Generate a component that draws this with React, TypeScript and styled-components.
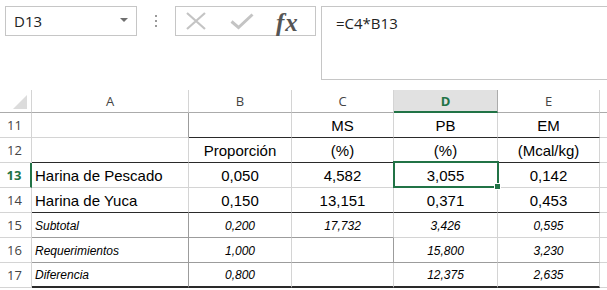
import React from "react";
import styled, { createGlobalStyle } from "styled-components";

const GlobalStyle = createGlobalStyle`
  html, body { margin: 0; padding: 0; background: #ffffff; }
  body { font-family: "Liberation Sans", Arial, sans-serif; overflow: hidden; }
`;

const GREEN = "#217346";
const GRID = "#d4d4d4";
const MID = "#9c9c9c";
const DARK = "#2a2a2a";

type Line = "grid" | "mid" | "dark" | "thick" | "none";

const lineCss = (l: Line) => {
  switch (l) {
    case "grid":
      return `1px solid ${GRID}`;
    case "mid":
      return `1px solid ${MID}`;
    case "dark":
      return `1px solid ${DARK}`;
    case "thick":
      return `2px solid ${DARK}`;
    default:
      return "none";
  }
};

const Page = styled.div`
  width: 607px;
  height: 290px;
  overflow: hidden;
  background: #fff;
`;

const TopBar = styled.div`
  display: flex;
  align-items: flex-start;
  padding: 6px 0 0 5px;
  height: 84px;
  box-sizing: border-box;
`;

const NameBox = styled.div`
  box-sizing: border-box;
  width: 132px;
  height: 30px;
  border: 1px solid #c6c6c6;
  display: flex;
  align-items: center;
  justify-content: space-between;
  padding: 0 8px 0 8px;
  font-family: "Open Sans", sans-serif;
  font-size: 15px;
  color: #222;
`;

const Caret = styled.span`
  width: 0;
  height: 0;
  border-left: 4px solid transparent;
  border-right: 4px solid transparent;
  border-top: 4px solid #6f6f6f;
  margin-top: -2px;
`;

const Dots = styled.div`
  width: 38px;
  height: 30px;
  display: flex;
  flex-direction: column;
  align-items: center;
  justify-content: center;
  gap: 3px;
`;

const Dot = styled.span`
  width: 2px;
  height: 2px;
  background: #9a9a9a;
`;

const FxBox = styled.div`
  box-sizing: border-box;
  width: 141px;
  height: 30px;
  border: 1px solid #c6c6c6;
  display: flex;
  align-items: center;
  padding: 0 0 0 9px;
  gap: 23px;
`;

const FxText = styled.span`
  font-family: "Liberation Serif", "DejaVu Serif", serif;
  font-style: italic;
  font-weight: bold;
  font-size: 25px;
  color: #555;
  margin-left: -1px;
  letter-spacing: 1px;
  line-height: 1;
  margin-top: 2px;
`;

const FormulaBar = styled.div`
  box-sizing: border-box;
  flex: 1;
  margin-left: 5px;
  height: 74px;
  border: 1px solid #c6c6c6;
  border-right: none;
  padding: 6px 0 0 14px;
  font-family: "Open Sans", sans-serif;
  font-size: 15px;
  color: #222;
`;

const Sheet = styled.div`
  margin-top: 6px;
  display: grid;
  grid-template-columns: 32px 157px 103px 102px 104px 102px 1fr;
  grid-auto-rows: 25px;
  grid-template-rows: 23px;
`;

const Corner = styled.div`
  box-sizing: border-box;
  border-right: 1px solid ${GRID};
  border-bottom: 1px solid #ababab;
  display: flex;
  align-items: flex-end;
  justify-content: flex-end;
  padding: 0 4px 3px 0;
`;

const Triangle = styled.span`
  width: 0;
  height: 0;
  border-left: 14px solid transparent;
  border-bottom: 14px solid #dcdcdc;
`;

const ColHead = styled.div<{ $sel?: boolean; $last?: boolean }>`
  box-sizing: border-box;
  display: flex;
  align-items: center;
  justify-content: center;
  font-family: "Open Sans", sans-serif;
  font-size: 13px;
  color: ${(p) => (p.$sel ? GREEN : "#444")};
  font-weight: ${(p) => (p.$sel ? 700 : 400)};
  background: ${(p) => (p.$sel ? "#e1e1e1" : "#fff")};
  border-right: ${(p) => (p.$last ? "none" : `1px solid ${p.$sel ? "#ababab" : GRID}`)};
  border-bottom: ${(p) => (p.$sel ? `2px solid ${GREEN}` : "1px solid #ababab")};
  padding-top: ${(p) => (p.$sel ? "1px" : "0")};
`;

const RowHead = styled.div<{ $sel?: boolean }>`
  box-sizing: border-box;
  display: flex;
  align-items: center;
  justify-content: center;
  font-family: "Open Sans", sans-serif;
  font-size: 13px;
  color: ${(p) => (p.$sel ? GREEN : "#444")};
  font-weight: ${(p) => (p.$sel ? 700 : 400)};
  border-right: ${(p) => (p.$sel ? `2px solid ${GREEN}` : `1px solid ${GRID}`)};
  border-bottom: 1px solid ${GRID};
  padding-right: 2px;
`;

const Cell = styled.div<{
  $align: "left" | "center";
  $italic?: boolean;
  $bottom: Line;
  $right: Line;
}>`
  box-sizing: border-box;
  position: relative;
  display: flex;
  align-items: center;
  justify-content: ${(p) => (p.$align === "left" ? "flex-start" : "center")};
  padding: ${(p) => (p.$align === "left" ? "1px 0 0 3px" : "1px 0 0 0")};
  font-family: "Liberation Sans", Arial, sans-serif;
  font-size: ${(p) => (p.$italic ? "12px" : "15px")};
  font-style: ${(p) => (p.$italic ? "italic" : "normal")};
  color: #000;
  white-space: nowrap;
  border-bottom: ${(p) => lineCss(p.$bottom)};
  border-right: ${(p) => lineCss(p.$right)};
`;

const Selection = styled.div`
  position: absolute;
  top: -2px;
  left: -1px;
  width: 106px;
  height: 27px;
  box-sizing: border-box;
  border: 2px solid ${GREEN};
  z-index: 2;
  pointer-events: none;
`;

const Handle = styled.div`
  position: absolute;
  right: -4px;
  bottom: -4px;
  width: 5px;
  height: 5px;
  background: ${GREEN};
  border: 1px solid #fff;
`;

type CellDef = { t: string; b: Line; r?: Line; sel?: boolean };
type RowDef = { n: number; italic?: boolean; cells: CellDef[]; f: Line };

const rows: RowDef[] = [
  {
    n: 11,
    f: "grid",
    cells: [
      { t: "", b: "grid", r: "mid" },
      { t: "", b: "dark" },
      { t: "MS", b: "dark" },
      { t: "PB", b: "dark" },
      { t: "EM", b: "dark" },
    ],
  },
  {
    n: 12,
    f: "grid",
    cells: [
      { t: "", b: "dark" },
      { t: "Proporción", b: "dark" },
      { t: "(%)", b: "dark" },
      { t: "(%)", b: "dark" },
      { t: "(Mcal/kg)", b: "dark" },
    ],
  },
  {
    n: 13,
    f: "grid",
    cells: [
      { t: "Harina de Pescado", b: "grid" },
      { t: "0,050", b: "grid" },
      { t: "4,582", b: "grid" },
      { t: "3,055", b: "grid", sel: true },
      { t: "0,142", b: "grid" },
    ],
  },
  {
    n: 14,
    f: "grid",
    cells: [
      { t: "Harina de Yuca", b: "dark" },
      { t: "0,150", b: "dark" },
      { t: "13,151", b: "dark" },
      { t: "0,371", b: "dark" },
      { t: "0,453", b: "dark" },
    ],
  },
  {
    n: 15,
    italic: true,
    f: "grid",
    cells: [
      { t: "Subtotal", b: "mid", r: "mid" },
      { t: "0,200", b: "mid" },
      { t: "17,732", b: "mid" },
      { t: "3,426", b: "grid" },
      { t: "0,595", b: "grid" },
    ],
  },
  {
    n: 16,
    italic: true,
    f: "grid",
    cells: [
      { t: "Requerimientos", b: "mid", r: "mid" },
      { t: "1,000", b: "mid" },
      { t: "", b: "mid", r: "mid" },
      { t: "15,800", b: "mid" },
      { t: "3,230", b: "mid" },
    ],
  },
  {
    n: 17,
    italic: true,
    f: "grid",
    cells: [
      { t: "Diferencia", b: "thick", r: "mid" },
      { t: "0,800", b: "thick" },
      { t: "", b: "thick" },
      { t: "12,375", b: "thick" },
      { t: "2,635", b: "thick" },
    ],
  },
];

const XIcon = () => (
  <svg width="22" height="18" viewBox="0 0 22 18">
    <path d="M2 1 L20 17 M20 1 L2 17" stroke="#c4c4c4" strokeWidth="2.2" fill="none" />
  </svg>
);

const CheckIcon = () => (
  <svg width="24" height="18" viewBox="0 0 24 18">
    <path d="M1.5 9.5 L8.5 15.5 L22.5 2.5" stroke="#c4c4c4" strokeWidth="3" fill="none" strokeLinejoin="miter" />
  </svg>
);

export default function App() {
  return (
    <Page>
      <GlobalStyle />
      <TopBar>
        <NameBox>
          <span>D13</span>
          <Caret />
        </NameBox>
        <Dots>
          <Dot />
          <Dot />
          <Dot />
        </Dots>
        <FxBox>
          <XIcon />
          <CheckIcon />
          <FxText>fx</FxText>
        </FxBox>
        <FormulaBar>=C4*B13</FormulaBar>
      </TopBar>
      <Sheet>
        <Corner>
          <Triangle />
        </Corner>
        {["A", "B", "C", "D", "E", ""].map((c, i) => (
          <ColHead key={i} $sel={c === "D"} $last={c === ""}>
            {c}
          </ColHead>
        ))}
        {rows.map((row) => (
          <React.Fragment key={row.n}>
            <RowHead $sel={row.n === 13}>{row.n}</RowHead>
            {row.cells.map((c, i) => (
              <Cell
                key={i}
                $align={i === 0 ? "left" : "center"}
                $italic={row.italic}
                $bottom={c.b}
                $right={c.r ?? "grid"}
              >
                {c.t}
                {c.sel && (
                  <Selection>
                    <Handle />
                  </Selection>
                )}
              </Cell>
            ))}
            <Cell $align="left" $bottom={row.f} $right="none" />
          </React.Fragment>
        ))}
      </Sheet>
    </Page>
  );
}
